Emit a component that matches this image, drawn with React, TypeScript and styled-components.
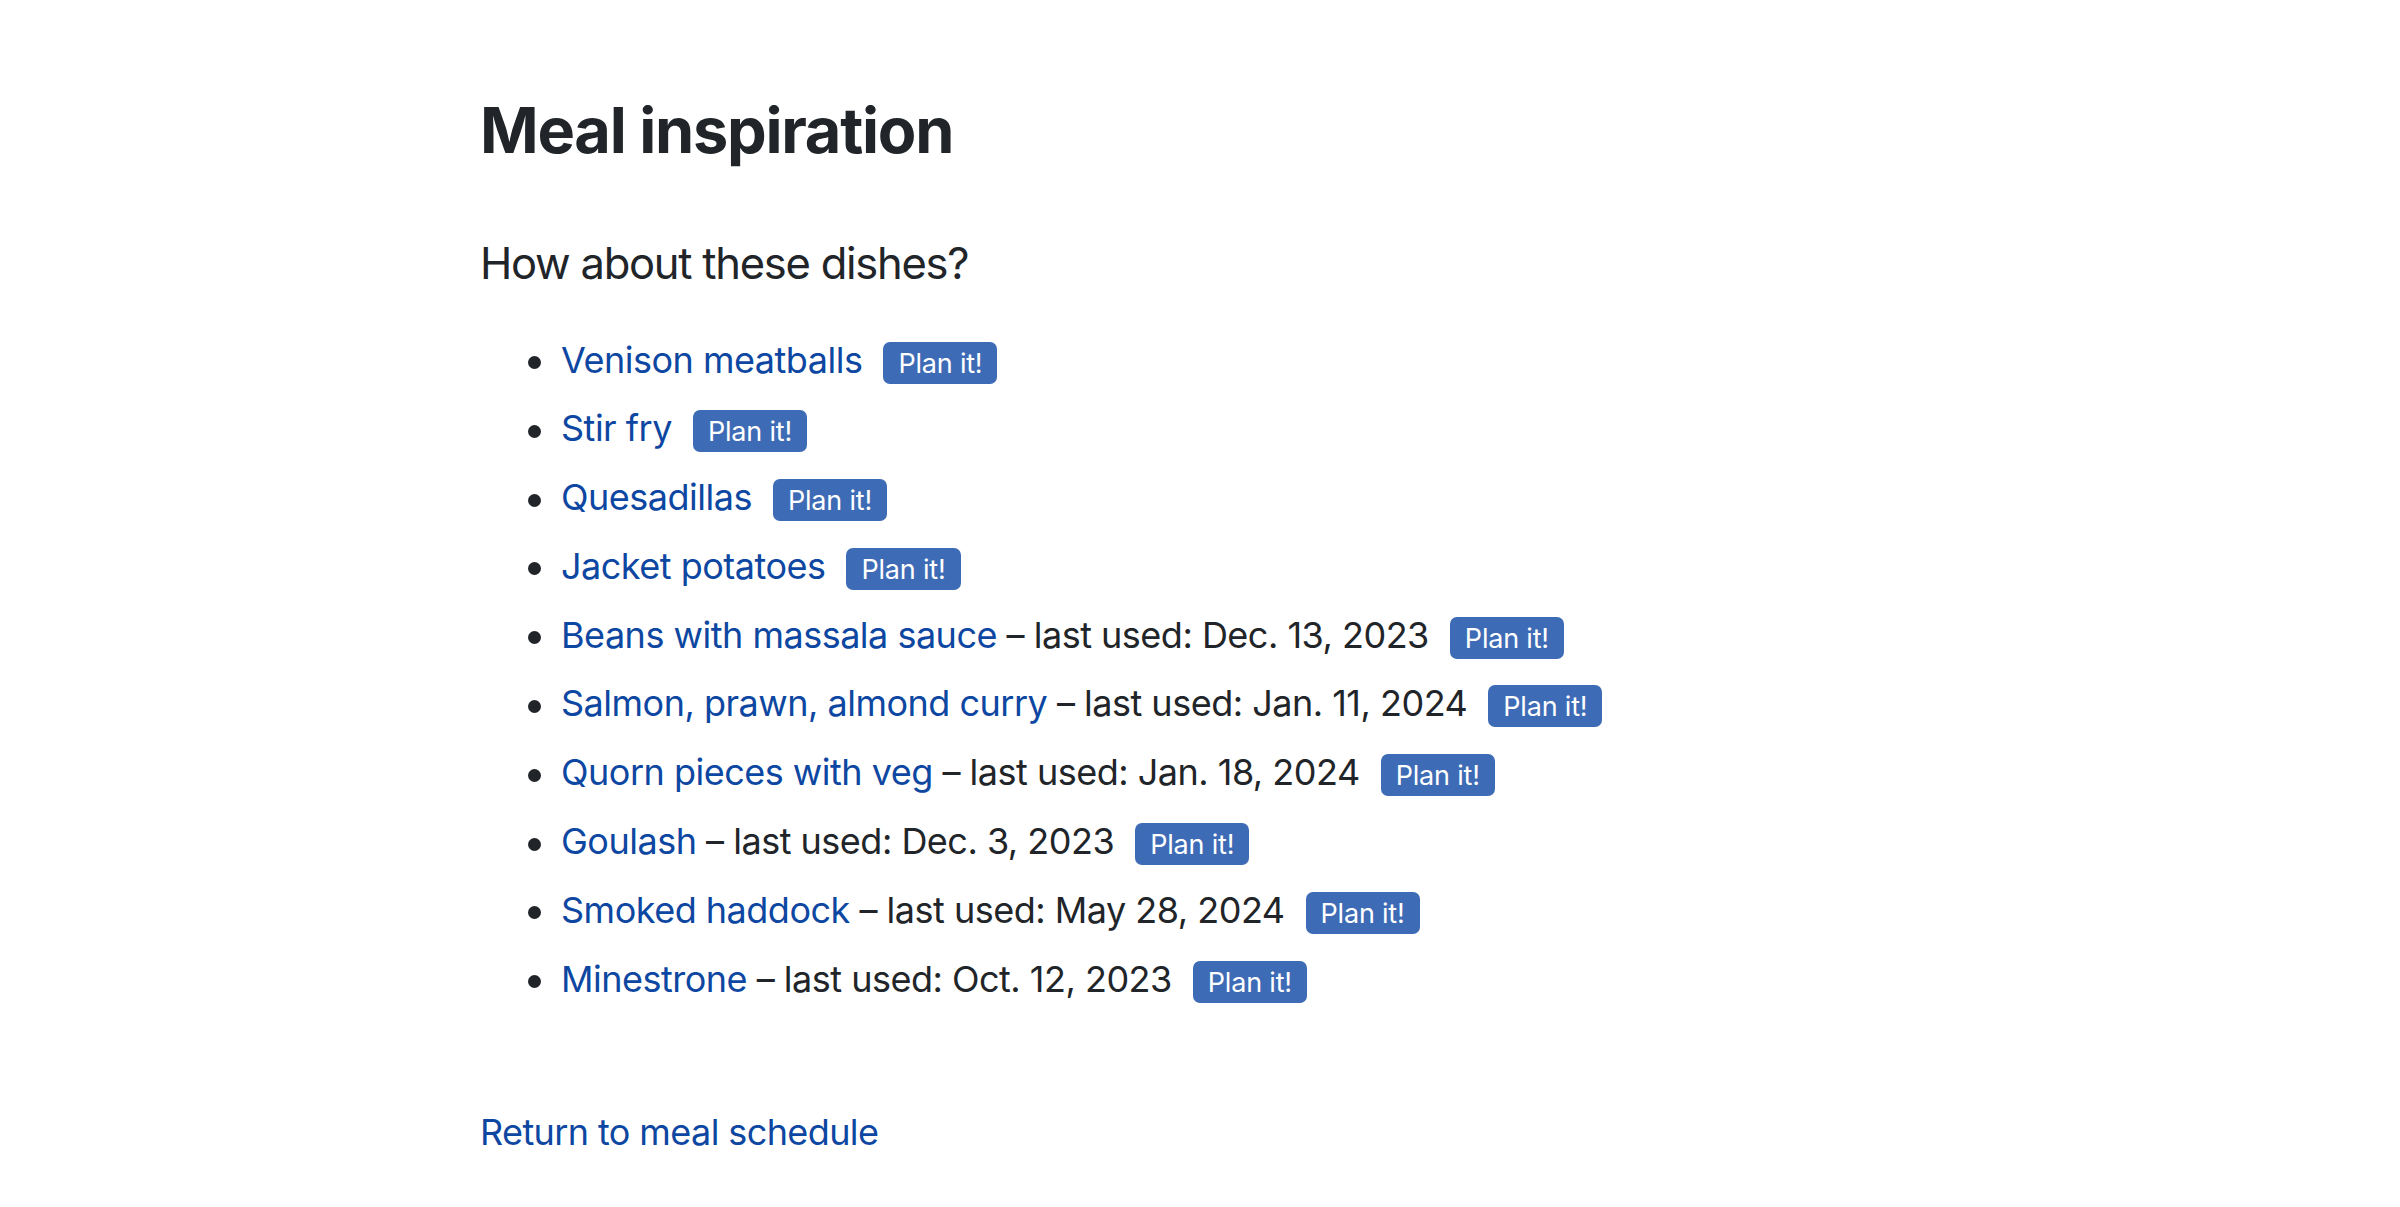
import React from "react";
import styled, { createGlobalStyle } from "styled-components";

const GlobalStyle = createGlobalStyle`
  html, body {
    margin: 0;
    padding: 0;
    background: #ffffff;
  }
  body {
    font-family: Inter, "Noto Sans", "Liberation Sans", sans-serif;
    color: #212529;
  }
`;

const Page = styled.main`
  width: 1440px;
  margin: 0 auto;
  padding-top: 92px;
  padding-bottom: 60px;
`;

const Title = styled.h1`
  margin: 0;
  font-size: 63px;
  line-height: 76px;
  font-weight: 700;
  letter-spacing: -1.25px;
  color: #212529;
`;

const Lead = styled.p`
  margin: 62px 0 0;
  font-size: 43.5px;
  line-height: 66px;
  font-weight: 400;
  letter-spacing: -1.25px;
`;

const DishList = styled.ul`
  list-style: none;
  margin: 29.5px 0 0;
  padding: 0 0 0 48px;
`;

const DishItem = styled.li`
  font-size: 36px;
  line-height: 68.8px;
  letter-spacing: -0.5px;
  white-space: nowrap;

  &::before {
    content: "";
    display: inline-block;
    width: 13px;
    height: 13px;
    border-radius: 50%;
    background: #212529;
    margin-right: 20px;
    vertical-align: 3.5px;
  }
`;

const DishLink = styled.a`
  color: #0d47a1;
  text-decoration: none;
`;

const LastUsed = styled.span`
  color: #212529;
`;

const PlanBadge = styled.a`
  display: inline-block;
  margin-left: 21px;
  padding: 6px 15px 4.5px;
  font-size: 27px;
  line-height: 31.5px;
  font-weight: 400;
  letter-spacing: -0.2px;
  color: #ffffff;
  background: #3d6bb5;
  border-radius: 7px;
  text-decoration: none;
`;

const ReturnLink = styled.a`
  display: inline-block;
  margin-top: 91.5px;
  font-size: 36px;
  line-height: 54px;
  letter-spacing: -0.6px;
  color: #0d47a1;
  text-decoration: none;
`;

type Dish = { name: string; lastUsed?: string };

const dishes: Dish[] = [
  { name: "Venison meatballs" },
  { name: "Stir fry" },
  { name: "Quesadillas" },
  { name: "Jacket potatoes" },
  { name: "Beans with massala sauce", lastUsed: "Dec. 13, 2023" },
  { name: "Salmon, prawn, almond curry", lastUsed: "Jan. 11, 2024" },
  { name: "Quorn pieces with veg", lastUsed: "Jan. 18, 2024" },
  { name: "Goulash", lastUsed: "Dec. 3, 2023" },
  { name: "Smoked haddock", lastUsed: "May 28, 2024" },
  { name: "Minestrone", lastUsed: "Oct. 12, 2023" },
];

export default function App() {
  return (
    <>
      <GlobalStyle />
      <Page>
        <Title>Meal inspiration</Title>
        <Lead>How about these dishes?</Lead>
        <DishList>
          {dishes.map((d) => (
            <DishItem key={d.name}>
              <DishLink href="#">{d.name}</DishLink>
              {d.lastUsed && <LastUsed> – last used: {d.lastUsed}</LastUsed>}
              <PlanBadge href="#">Plan it!</PlanBadge>
            </DishItem>
          ))}
        </DishList>
        <ReturnLink href="#">Return to meal schedule</ReturnLink>
      </Page>
    </>
  );
}
